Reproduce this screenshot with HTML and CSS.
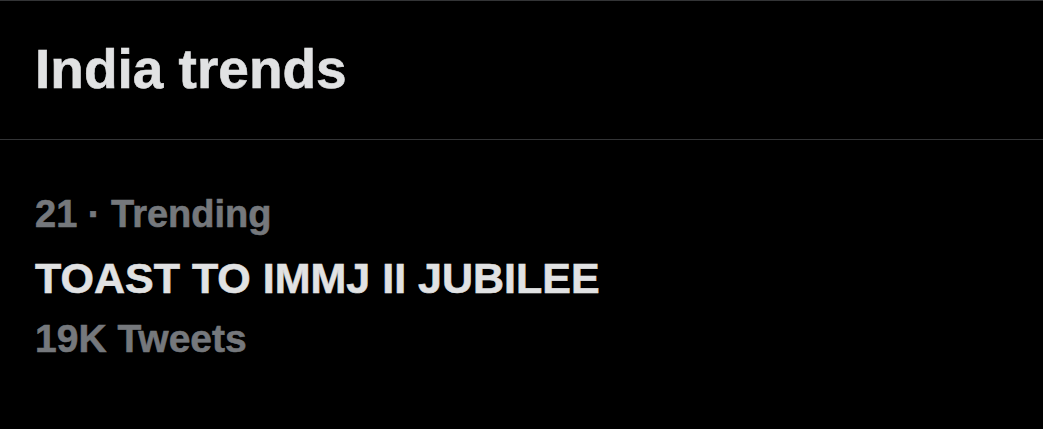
FILE: index.html
```
<!DOCTYPE html>
<html lang="en">

<head>
    <meta charset="UTF-8">
    <meta name="viewport" content="width=device-width, initial-scale=1.0">
    <title>India trends</title>
    <link rel="stylesheet" href="styles.css">
</head>

<body>
    <div class="panel">
        <div class="panel-head">
            <h2>India trends</h2>
        </div>

        <div class="trend">
            <div class="trend-meta">21 · Trending</div>
            <div class="trend-name">TOAST TO IMMJ II JUBILEE</div>
            <div class="trend-count">19K Tweets</div>
        </div>
    </div>
</body>

</html>
```

FILE: styles.css
```
* {
    box-sizing: border-box;
    margin: 0;
    padding: 0;
}

body {
    background-color: #000;
    font-family: "Liberation Sans", Arial, sans-serif;
    font-weight: 700;
    /* a touch heavier than plain bold */
    -webkit-text-stroke: 0.6px currentColor;
}

.panel {
    border-top: 1px solid #333436;
}

/* title row */
.panel-head {
    padding: 36px 35px 38px;
    border-bottom: 1px solid #333436;
}

.panel-head h2 {
    font-size: 55px;
    line-height: 64px;
    color: #e1e2e3;
}

/* one trend entry */
.trend {
    padding: 43px 35px 0;
}

.trend-meta {
    font-size: 38px;
    line-height: 62px;
    color: #75787c;
}

.trend-name {
    font-size: 43px;
    line-height: 66px;
    color: #e1e2e3;
}

.trend-count {
    font-size: 39px;
    line-height: 56px;
    color: #75787c;
}
```
